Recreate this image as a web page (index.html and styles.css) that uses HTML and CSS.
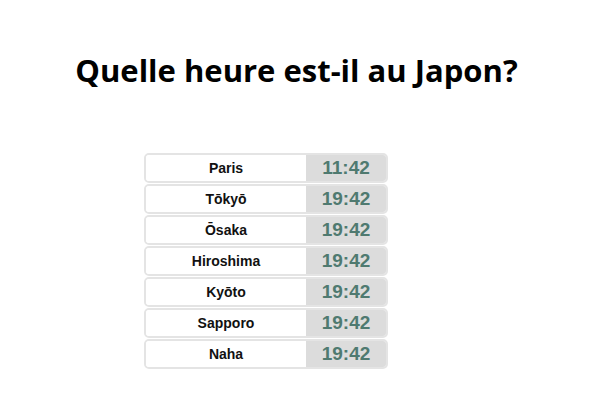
FILE: index.html
```html
<!DOCTYPE html>
<html>
<head>
<meta charset="utf-8">
<link rel="stylesheet" href="styles.css">
</head>
<body>
<h1 class="title">Quelle heure est-il au Japon?</h1>
<div class="table">
  <div class="row"><div class="city">Paris</div><div class="time">11:42</div></div>
  <div class="row"><div class="city">Tōkyō</div><div class="time">19:42</div></div>
  <div class="row"><div class="city">Ōsaka</div><div class="time">19:42</div></div>
  <div class="row"><div class="city">Hiroshima</div><div class="time">19:42</div></div>
  <div class="row"><div class="city">Kyōto</div><div class="time">19:42</div></div>
  <div class="row"><div class="city">Sapporo</div><div class="time">19:42</div></div>
  <div class="row"><div class="city">Naha</div><div class="time">19:42</div></div>
</div>
</body>
</html>
```
FILE: styles.css
```css
html, body {
  margin: 0;
  padding: 0;
  background: #fff;
}
body {
  width: 600px;
  height: 410px;
}
.title {
  margin: 0;
  padding-top: 46px;
  font-family: "Open Sans", sans-serif;
  font-weight: bold;
  font-size: 31px;
  line-height: 48px;
  text-align: center;
  color: #000;
  padding-right: 7px;
}
.table {
  margin: 59px 0 0 144px;
  width: 244px;
  display: flex;
  flex-direction: column;
  gap: 1px;
}
.row {
  display: flex;
  height: 30px;
  box-sizing: border-box;
  border: 2px solid #e4e4e4;
  border-radius: 5px;
  overflow: hidden;
}
.city {
  width: 160px;
  background: #fff;
  display: flex;
  align-items: center;
  justify-content: center;
  font-family: "Liberation Sans", Arial, sans-serif;
  font-weight: bold;
  font-size: 14px;
  color: #111;
}
.time {
  flex: 1;
  background: #dcdcdc;
  display: flex;
  align-items: center;
  justify-content: center;
  font-family: "Liberation Sans", Arial, sans-serif;
  font-weight: bold;
  font-size: 19px;
  color: #4f7a70;
}
```
